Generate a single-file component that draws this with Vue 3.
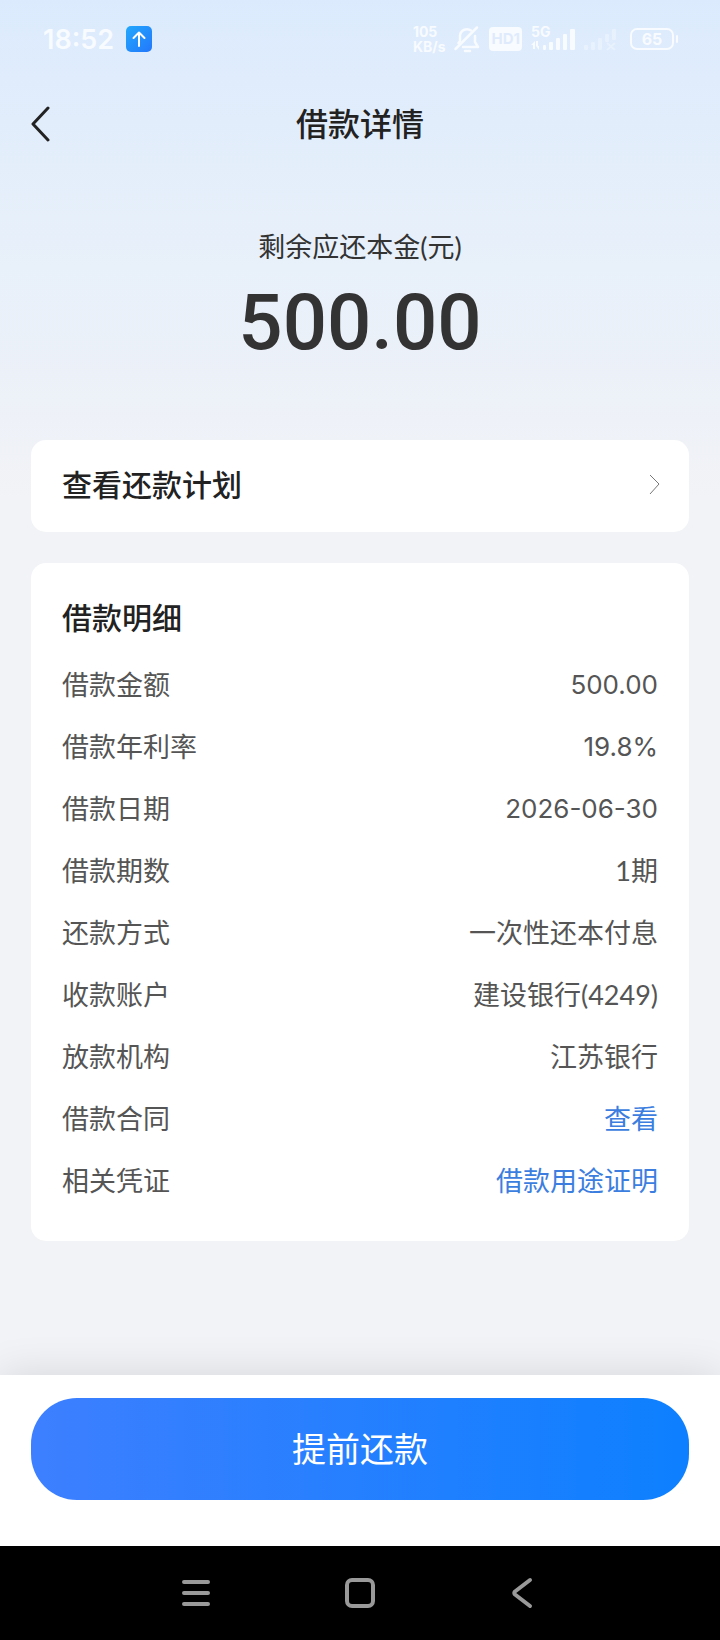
<template>
  <div class="page">
    <div class="status-bar">
      <span class="clock">18:52</span>
      <svg class="app-badge" viewBox="0 0 26 26">
        <defs>
          <linearGradient id="badgeFill" x1="0" y1="0" x2="1" y2="1">
            <stop offset="0" stop-color="#22a8fd" />
            <stop offset="1" stop-color="#2377fb" />
          </linearGradient>
        </defs>
        <rect width="26" height="26" rx="5" fill="url(#badgeFill)" />
        <path d="M13 20V6.500M7.500 12 13 6.500 18.500 12" fill="none" stroke="#fff" stroke-width="2" stroke-linecap="round" stroke-linejoin="round" />
      </svg>
      <div class="status-icons">
        <span class="speed">105<br />KB/s</span>
        <svg class="bell" viewBox="0 0 28 28" fill="none" stroke="currentColor" stroke-width="2.500" stroke-linecap="round" stroke-linejoin="round">
          <path d="M18 5.500A7 7 0 0 0 7 11v5l-1.500 2M10 22h15l-3-5v-6" />
          <path d="M2.500 24 24 2.500M12 26h5" />
        </svg>
        <span class="hd">HD1</span>
        <span class="signal">
          <span class="net">5G</span>
          <svg viewBox="0 0 46 26" fill="currentColor">
            <path d="M0 19l4-4v8H2v-4zM8 24l-3-4V15h2v5h1z" />
            <rect x="12" y="19" width="3" height="5" rx="1" />
            <rect x="18" y="16" width="4" height="8" rx="1" />
            <rect x="25" y="12" width="4" height="12" rx="1" />
            <rect x="32" y="8" width="4" height="16" rx="1" />
            <rect x="39" y="3" width="5" height="21" rx="1" />
          </svg>
        </span>
        <svg class="signal-off" viewBox="0 0 34 26" fill="currentColor">
          <rect x="0" y="19" width="4" height="5" rx="1" />
          <rect x="7" y="16" width="4" height="8" rx="1" />
          <rect x="14" y="12" width="4" height="12" rx="1" />
          <rect x="21" y="8" width="4" height="8" rx="1" />
          <rect x="28" y="3" width="4" height="11" rx="1" />
          <path d="M23 17l8 7M31 17l-8 7" stroke="currentColor" stroke-width="2" />
        </svg>
        <span class="battery">65</span>
      </div>
    </div>

    <header class="nav-header">
      <button class="back" type="button" aria-label="返回">
        <svg viewBox="0 0 20 36"><path d="M17 2 2 18l15 16" /></svg>
      </button>
      <h1>借款详情</h1>
    </header>

    <main>
      <section class="summary">
        <p class="summary-label">剩余应还本金(元)</p>
        <p class="summary-amount">500.00</p>
      </section>

      <a class="card plan" href="#">
        <span>查看还款计划</span>
        <svg viewBox="0 0 12 22"><path d="M1 2l9 9-9 10" /></svg>
      </a>

      <section class="card detail">
        <h2>借款明细</h2>
        <dl>
          <div v-for="row in rows" :key="row.label" class="row">
            <dt>{{ row.label }}</dt>
            <dd :class="{ number: row.number }">
              <a v-if="row.link" href="#">{{ row.value }}</a>
              <template v-else>{{ row.value }}</template>
            </dd>
          </div>
        </dl>
      </section>
    </main>

    <footer class="action-bar">
      <button type="button">提前还款</button>
    </footer>

    <nav class="system-nav">
      <button type="button" aria-label="最近任务">
        <svg viewBox="0 0 32 32"><path d="M4 5h24M4 16h24M4 27h24" /></svg>
      </button>
      <button type="button" aria-label="主屏幕">
        <svg viewBox="0 0 32 32"><rect x="3" y="3" width="26" height="26" rx="5" /></svg>
      </button>
      <button type="button" aria-label="返回">
        <svg viewBox="0 0 32 32"><path d="M22 3 7 14.500q-1.500 1.500 0 3L22 29" /></svg>
      </button>
    </nav>
  </div>
</template>

<script setup>
const rows = [
  { label: '借款金额', value: '500.00', number: true },
  { label: '借款年利率', value: '19.8%', number: true },
  { label: '借款日期', value: '2026-06-30', number: true },
  { label: '借款期数', value: '1期' },
  { label: '还款方式', value: '一次性还本付息' },
  { label: '收款账户', value: '建设银行(4249)' },
  { label: '放款机构', value: '江苏银行' },
  { label: '借款合同', value: '查看', link: true },
  { label: '相关凭证', value: '借款用途证明', link: true }
];
</script>

<style>
body {
  background: #f2f3f7;
}
</style>

<style scoped>
.page {
  display: flex;
  flex-direction: column;
  min-height: 100vh;
  font-family: Lato, 'Noto Sans CJK SC', sans-serif;
  color: #222;
  background: linear-gradient(#dbebfd 0, #e0ecfc 80px, #e7f0fa 240px, #edf1f8 400px, #f2f3f6 500px);
}

h1,
h2,
p,
dl,
dd {
  margin: 0;
}

button {
  padding: 0;
  border: 0;
  background: none;
  font-family: inherit;
}

a {
  color: #3c7ee0;
  text-decoration: none;
}

/* status bar */
.status-bar {
  display: flex;
  align-items: center;
  height: 78px;
  padding: 0 46px 0 43px;
  color: #f8fbff;
  font-family: Inter, sans-serif;
}

.clock {
  font-size: 27px;
  font-weight: 600;
}

.app-badge {
  width: 26px;
  height: 26px;
  margin-left: 12px;
}

.status-icons {
  display: flex;
  align-items: center;
  margin-left: auto;
}

.speed {
  font-size: 14px;
  font-weight: 700;
  line-height: 15px;
}

.bell {
  width: 28px;
  height: 28px;
  margin-left: 8px;
}

.hd {
  margin-left: 8px;
  padding: 0 2px;
  border-radius: 4px;
  background: #f8fbff;
  color: #dfebfc;
  font-size: 15px;
  font-weight: 700;
  line-height: 24px;
}

.signal {
  position: relative;
  display: flex;
  margin-left: 9px;
}

.signal svg {
  width: 46px;
  height: 26px;
}

.net {
  position: absolute;
  top: 0;
  left: 0;
  font-size: 14px;
  font-weight: 700;
  line-height: 12px;
}

.signal-off {
  width: 34px;
  height: 26px;
  margin-left: 7px;
  opacity: 0.4;
}

.battery {
  position: relative;
  width: 40px;
  margin-left: 12px;
  border: 2px solid #f8fbff;
  border-radius: 7px;
  font-size: 16px;
  font-weight: 700;
  line-height: 18px;
  text-align: center;
}

.battery::after {
  content: '';
  position: absolute;
  top: 5px;
  right: -6px;
  width: 2px;
  height: 8px;
  border-radius: 1px;
  background: #f8fbff;
}

/* title */
.nav-header {
  display: grid;
  grid-template-columns: 60px 1fr 60px;
  align-items: center;
  height: 92px;
  padding: 0 31px;
}

.back {
  display: flex;
}

.back svg {
  width: 20px;
  height: 36px;
}

.back path {
  fill: none;
  stroke: #222;
  stroke-width: 3;
  stroke-linecap: round;
  stroke-linejoin: round;
}

h1 {
  font-size: 32px;
  font-weight: 500;
  line-height: 48px;
  text-align: center;
}

main {
  flex: 1;
  padding: 0 31px 32px;
}

.summary {
  padding: 57px 0 67px;
  text-align: center;
}

.summary-label {
  color: #333;
  font-size: 27px;
  line-height: 40px;
}

.summary-amount {
  margin-top: 6px;
  color: #333;
  font-family: Roboto, sans-serif;
  font-size: 78px;
  font-weight: 500;
  line-height: 100px;
}

.card {
  border-radius: 15px;
  background: #fff;
}

.plan {
  display: flex;
  align-items: center;
  justify-content: space-between;
  padding: 20px 28px 24px 31px;
  color: #222;
  font-size: 30px;
  font-weight: 500;
  line-height: 48px;
}

.plan svg {
  width: 12px;
  height: 22px;
}

.plan path {
  fill: none;
  stroke: #777;
  stroke-width: 1;
}

.detail {
  margin-top: 31px;
  padding: 30px 31px 29px;
}

h2 {
  font-size: 30px;
  font-weight: 500;
  line-height: 48px;
}

dl {
  margin-top: 13px;
}

.row {
  display: flex;
  justify-content: space-between;
  color: #555;
  font-size: 27px;
  line-height: 62px;
}

.number {
  font-family: Inter, sans-serif;
  font-size: 26px;
}

/* bottom */
.action-bar {
  padding: 23px 31px 46px;
  background: #fff;
  box-shadow: 0 0 40px rgba(0, 0, 0, 0.12);
}

.action-bar button {
  display: block;
  width: 100%;
  height: 102px;
  border-radius: 46px;
  background: linear-gradient(90deg, #3d7fff, #0d80ff);
  color: #fff;
  font-size: 34px;
  line-height: 48px;
}

.system-nav {
  position: relative;
  display: grid;
  grid-template-columns: repeat(3, 1fr);
  justify-items: center;
  align-items: center;
  height: 94px;
  padding: 0 114px;
  background: #000;
}

.system-nav button {
  display: flex;
}

.system-nav svg {
  width: 32px;
  height: 32px;
  fill: none;
  stroke: #999;
  stroke-width: 4;
  stroke-linecap: round;
  stroke-linejoin: round;
}
</style>
